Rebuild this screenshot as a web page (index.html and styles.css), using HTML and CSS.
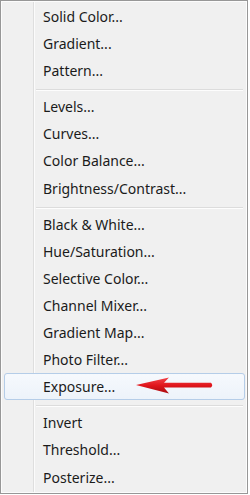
FILE: index.html
```html
<!DOCTYPE html>
<html>
<head>
<meta charset="utf-8">
<link rel="stylesheet" href="styles.css">
</head>
<body>
<div class="menu">
  <ul class="group">
    <li class="item">Solid Color...</li>
    <li class="item">Gradient...</li>
    <li class="item">Pattern...</li>
  </ul>
  <div class="sep"></div>
  <ul class="group">
    <li class="item">Levels...</li>
    <li class="item">Curves...</li>
    <li class="item">Color Balance...</li>
    <li class="item">Brightness/Contrast...</li>
  </ul>
  <div class="sep"></div>
  <ul class="group">
    <li class="item">Black &amp; White...</li>
    <li class="item">Hue/Saturation...</li>
    <li class="item">Selective Color...</li>
    <li class="item">Channel Mixer...</li>
    <li class="item">Gradient Map...</li>
    <li class="item">Photo Filter...</li>
    <li class="item active">Exposure...
      <svg class="arrow" width="80" height="20" viewBox="0 0 80 20">
        <defs>
          <linearGradient id="rg" x1="0" y1="0" x2="0" y2="1">
            <stop offset="0" stop-color="#f2444a"/>
            <stop offset="0.5" stop-color="#e0161c"/>
            <stop offset="1" stop-color="#a80c10"/>
          </linearGradient>
        </defs>
        <path d="M1 10 L34 2.5 L29 7.8 L76 7.8 Q78.5 10.2 76 12.6 L29 12.6 L34 18.5 Z" fill="url(#rg)"/>
      </svg>
    </li>
  </ul>
  <div class="sep"></div>
  <ul class="group">
    <li class="item">Invert</li>
    <li class="item">Threshold...</li>
    <li class="item">Posterize...</li>
  </ul>
</div>
</body>
</html>
```
FILE: styles.css
```css
html, body {
  margin: 0;
  padding: 0;
  background: #ffffff;
}

.menu {
  position: relative;
  box-sizing: border-box;
  width: 248px;
  height: 494px;
  padding: 2px 0;
  border: 1px solid #979797;
  box-shadow: inset 1px 1px 0 #fcfcfc, inset -1px -1px 0 #fcfcfc;
  background: #f0f0f0;
  font-family: "Noto Sans", "Open Sans", sans-serif;
  font-size: 14px;
  color: #1b1b1b;
}

.menu::before {
  content: "";
  position: absolute;
  left: 32px;
  top: 1px;
  bottom: 1px;
  width: 1px;
  background: #dedede;
  border-right: 1px solid #fbfbfb;
}

.group {
  list-style: none;
  margin: 0;
  padding: 0;
}

.item {
  position: relative;
  box-sizing: border-box;
  height: 27.1px;
  line-height: 27px;
  padding-left: 42px;
  white-space: nowrap;
}

.item.active {
  margin: 0 2px 0 3px;
  padding-left: 38px;
  line-height: 25px;
  border: 1px solid #b5cde8;
  border-radius: 3px;
  background: linear-gradient(#f6f9fd, #edf3fa);
  z-index: 1;
}

.arrow {
  position: absolute;
  left: 130px;
  top: 1px;
}

.sep {
  margin: 5px 4px 2px 35px;
  border-top: 1px solid #dcdcdc;
  border-bottom: 1px solid #fdfdfd;
}
```
